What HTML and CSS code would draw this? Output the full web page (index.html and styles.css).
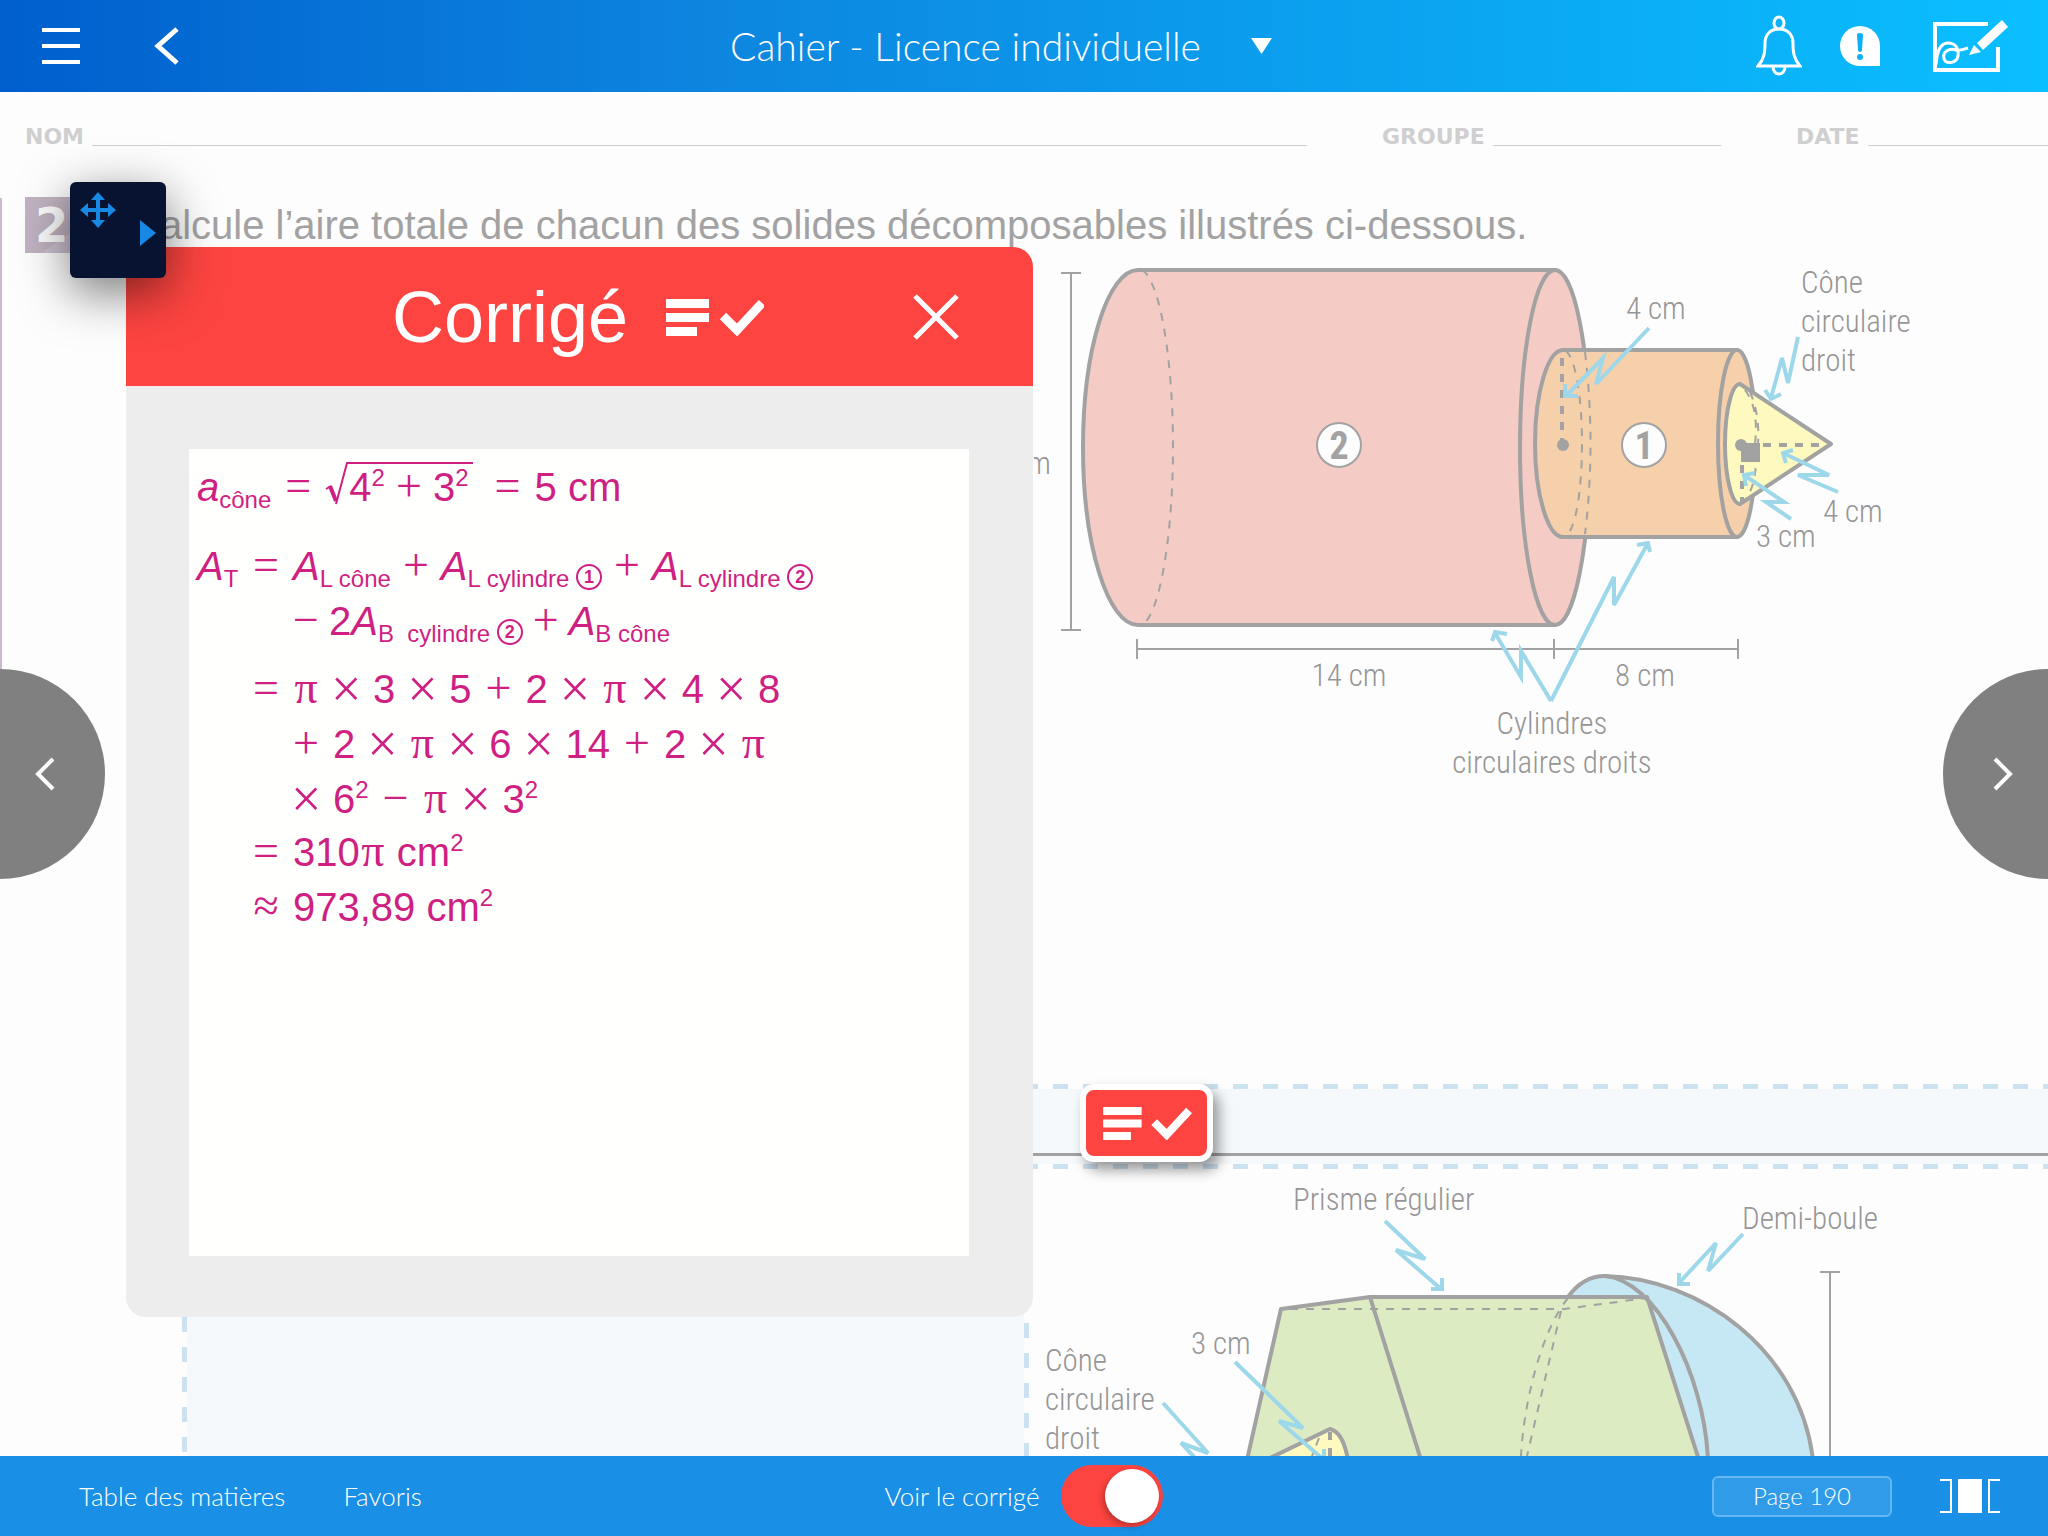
FILE: index.html
```html
<!DOCTYPE html>
<html lang="fr">
<head>
<meta charset="utf-8">
<meta name="viewport" content="width=device-width, initial-scale=1">
<title>Cahier - Licence individuelle</title>
<link rel="stylesheet" href="styles.css">
</head>
<body>
<svg class="defs" width="0" height="0" aria-hidden="true">
  <symbol id="icon-answer" viewBox="0 0 98 38">
    <path d="M0 1h43v9H0zM0 15h43v9H0zM0 29h31v9H0z" fill="#fff"/>
    <path d="M57 18l14 14L96 5" fill="none" stroke="#fff" stroke-width="9"/>
  </symbol>
</svg>

<header class="topbar">
  <div class="topbar-side">
    <button class="icon-btn" aria-label="Menu">
      <svg width="38" height="38" viewBox="0 0 38 38"><path d="M0 3h38M0 19h38M0 35h38" stroke="#fff" stroke-width="4"/></svg>
    </button>
    <button class="icon-btn back" aria-label="Retour">
      <svg width="28" height="42" viewBox="0 0 28 42"><path d="M25 4L6 21l19 17" fill="none" stroke="#fff" stroke-width="5"/></svg>
    </button>
  </div>
  <button class="book-title">Cahier - Licence individuelle
    <svg width="21" height="16" viewBox="0 0 21 16"><path d="M0 0h21L10.500 16z" fill="#fff"/></svg>
  </button>
  <div class="topbar-side tools">
    <button class="icon-btn" aria-label="Notifications">
      <svg width="46" height="62" viewBox="0 0 46 62" fill="none" stroke="#fff" stroke-width="3">
        <ellipse cx="23" cy="8" rx="5" ry="6"/>
        <path d="M2 51C8 44 9 38 9 28C9 20 14 14 23 14S37 20 37 28C37 38 38 44 44 51z"/>
        <path d="M17 52a6 7 0 0 0 12 0"/>
      </svg>
    </button>
    <button class="icon-btn" aria-label="Signaler">
      <svg width="40" height="40" viewBox="0 0 40 40">
        <path d="M20 0A20 20 0 0 0 20 40H40V20A20 20 0 0 0 20 0z" fill="#fff"/>
        <path d="M17 9q0-2 3-2t3 2l-1 15q0 2-2 2t-2-2z" fill="#0bb1f8"/><circle cx="20" cy="31" r="3" fill="#0bb1f8"/>
      </svg>
    </button>
    <button class="icon-btn annotate" aria-label="Annoter">
      <svg width="78" height="54" viewBox="0 0 78 54">
        <path d="M56 5H3v46h63V28" fill="none" stroke="#fff" stroke-width="4"/>
        <path d="M4 46C5 32 8 24 16 24c8 0 11 6 10 13s-12 9-14 3c-2-8 6-11 12-9 5 1 8-1 12-2" fill="none" stroke="#fff" stroke-width="3"/>
        <path d="M45 24L70 1l6 7L51 31zM42 26l7 7-12 3z" fill="#fff"/>
      </svg>
    </button>
  </div>
</header>

<main class="page">
  <div class="fields">
    <div class="field"><span>NOM</span><i></i></div>
    <div class="field"><span>GROUPE</span><i></i></div>
    <div class="field"><span>DATE</span><i></i></div>
  </div>

  <div class="question">
    <span class="question-no">2</span>
    <h2>Calcule l’aire totale de chacun des solides décomposables illustrés ci-dessous.</h2>
  </div>

  <svg class="figure" width="1014" height="831" viewBox="1034 253 1014 831" role="img" aria-label="Solide formé de deux cylindres et d’un cône">
    <g class="dim"><path d="M1071 273V630M1061 273h20M1061 630h20M1137 649H1738M1137 639v20M1554 639v20M1738 639v20"/></g>
    <g class="solid">
      <path class="pink" d="M1555 270H1138C1108 270 1083 349 1083 447.500S1108 625 1138 625H1555z"/>
      <ellipse class="pink" cx="1555" cy="447.500" rx="35" ry="177.500"/>
      <path class="orange" d="M1737 350H1563C1548 350 1535 392 1535 443.500S1548 537 1563 537H1737z"/>
      <ellipse class="orange" cx="1737" cy="443.500" rx="19" ry="93.500"/>
      <path class="yellow" d="M1740 384L1831 444 1740 504C1732 504 1725 478 1725 444S1732 384 1740 384z"/>
    </g>
    <g class="hidden-edge">
      <path d="M1142 270C1160 280 1173 360 1173 447S1160 615 1142 625"/>
      <path d="M1566 351C1575 358 1582 395 1582 444S1575 530 1566 536"/>
      <path d="M1585 352Q1596 444 1585 534"/>
      <path d="M1745 390Q1759 408 1755 444Q1759 482 1745 500M1750 392Q1760 415 1758 444"/>
    </g>
    <path class="radius" d="M1562 358V440M1763 445h64M1742 465v38"/>
    <g fill="#a2a2a2"><circle cx="1563" cy="445" r="6"/><circle cx="1741" cy="445" r="6"/><path d="M1741 443h19v19h-19z"/></g>
    <g class="badge-no"><circle cx="1339" cy="445" r="22"/><circle cx="1644" cy="445" r="22"/>
      <text x="1339" y="459">2</text><text x="1644" y="459">1</text></g>
    <g class="pointer">
      <path d="M1649 328L1596 384 1603 358 1566 396M1565 384V396H1578"/>
      <path d="M1798 337L1788 383 1782 358 1771 398M1765 390L1771 399 1781 394"/>
      <path d="M1838 492L1798 475 1829 475 1783 453M1793 450L1783 453 1786 463"/>
      <path d="M1791 519L1766 502 1784 502 1744 475M1755 473L1744 475 1746 486"/>
      <path d="M1551 701L1521 651V677L1495 633M1507 634L1495 632 1492 641"/>
      <path d="M1551 701L1614 577V605L1648 543M1637 545L1648 543 1650 552"/>
    </g>
    <g class="label">
      <text x="1051" y="474" text-anchor="end">12 cm</text>
      <text x="1626" y="319">4 cm</text>
      <text x="1801" y="293">Cône</text><text x="1801" y="332">circulaire</text><text x="1801" y="371">droit</text>
      <text x="1756" y="547">3 cm</text><text x="1823" y="522">4 cm</text>
      <text x="1349" y="686" text-anchor="middle">14 cm</text><text x="1645" y="686" text-anchor="middle">8 cm</text>
      <text x="1552" y="734" text-anchor="middle">Cylindres</text><text x="1552" y="773" text-anchor="middle">circulaires droits</text>
    </g>
  </svg>

  <div class="band"><button class="answer-btn" aria-label="Afficher le corrigé"><svg width="92" height="34"><use href="#icon-answer"/></svg></button></div>

  <div class="lower">
    <div class="answer-area"></div>
    <svg class="figure" width="1014" height="287" viewBox="1034 1169 1014 287" role="img" aria-label="Solide formé d’un prisme, d’une demi-boule et d’un cône">
      <path class="dim" d="M1830 1272V1456M1820 1272h20"/>
      <g class="solid">
        <path class="blue" d="M1568 1297Q1583 1276 1605 1276C1700 1278 1800 1350 1813 1460H1640L1568 1297z"/>
        <path class="green" d="M1247 1460L1281 1309 1370 1297H1647L1699 1460z"/>
        <path fill="none" d="M1370 1297L1421 1460M1605 1276C1655 1280 1704 1372 1708 1460"/>
        <path class="yellow" d="M1266 1460L1330 1429Q1343 1432 1348 1460z"/>
      </g>
      <path class="hidden-edge" d="M1290 1309H1564L1647 1298M1561 1311L1527 1456M1568 1298C1542 1330 1524 1400 1521 1456M1319 1438L1312 1456"/>
      <path class="radius" d="M1330 1432V1456"/>
      <g class="pointer">
        <path d="M1385 1221L1425 1259 1396 1250 1441 1289M1431 1289H1442V1278"/>
        <path d="M1743 1234L1708 1271 1716 1243 1679 1283M1679 1273V1284H1690"/>
        <path d="M1235 1362L1303 1428 1279 1421 1324 1460M1324 1449V1460"/>
        <path d="M1163 1403L1208 1453 1181 1443 1197 1460"/>
      </g>
      <g class="label">
        <text x="1293" y="1210">Prisme régulier</text><text x="1742" y="1229">Demi-boule</text><text x="1191" y="1354">3 cm</text>
        <text x="1045" y="1371">Cône</text><text x="1045" y="1410">circulaire</text><text x="1045" y="1449">droit</text>
      </g>
    </svg>
  </div>

  <section class="panel" aria-labelledby="panel-title">
    <div class="panel-head">
      <h1 id="panel-title">Corrigé</h1>
      <svg width="98" height="38"><use href="#icon-answer"/></svg>
      <button class="close" aria-label="Fermer"><svg width="46" height="46" viewBox="0 0 46 46"><path d="M2 2l42 42M44 2L2 44" stroke="#fff" stroke-width="5"/></svg></button>
    </div>
    <div class="sheet">
      <div class="row first">
        <span><em>a</em><sub>cône</sub></span><b>=</b>
        <span class="root"><svg width="24" height="44" viewBox="0 0 24 44"><path d="M1 27l5-3" fill="none" stroke="#cf1f83" stroke-width="2"/><path d="M5 24l6 15" fill="none" stroke="#cf1f83" stroke-width="4"/><path d="M11 42L22 1h2" fill="none" stroke="#cf1f83" stroke-width="2"/></svg><span class="radicand"><span>4<sup>2</sup></span><b>+</b><span>3<sup>2</sup></span></span></span>
        <b>=</b><span>5 cm</span>
      </div>
      <div class="steps">
        <span class="lhs"><em>A</em><sub>T</sub></span><b class="eq">=</b>
        <div class="row tight"><span><em>A</em><sub>L cône</sub></span><b>+</b><span><em>A</em><sub>L cylindre <i class="ring">1</i></sub></span><b>+</b><span><em>A</em><sub>L cylindre <i class="ring">2</i></sub></span></div>
        <div class="row minus"><b>−</b><span>2<em>A</em><sub>B&nbsp; cylindre <i class="ring">2</i></sub></span><b>+</b><span><em>A</em><sub>B cône</sub></span></div>
        <b class="eq gap">=</b>
        <div class="row gap"><b>π</b><b class="times">×</b><span>3</span><b class="times">×</b><span>5</span><b>+</b><span>2</span><b class="times">×</b><b>π</b><b class="times">×</b><span>4</span><b class="times">×</b><span>8</span></div>
        <div class="row"><b>+</b><span>2</span><b class="times">×</b><b>π</b><b class="times">×</b><span>6</span><b class="times">×</b><span>14</span><b>+</b><span>2</span><b class="times">×</b><b>π</b></div>
        <div class="row"><b class="times">×</b><span>6<sup>2</sup></span><b>−</b><b>π</b><b class="times">×</b><span>3<sup>2</sup></span></div>
        <b class="eq">=</b>
        <div class="row"><span>310<b>π</b> cm<sup>2</sup></span></div>
        <b class="eq">≈</b>
        <div class="row"><span>973,89 cm<sup>2</sup></span></div>
      </div>
    </div>
  </section>

  <button class="dock" aria-label="Déplacer la barre d’outils">
    <svg width="96" height="96" viewBox="0 0 96 96" fill="#1788e3">
      <path d="M28 10l7 8h-5v8h8v-5l8 7-8 7v-5h-8v8h5l-7 8-7-8h5v-8h-8v5l-8-7 8-7v5h8v-8h-5z"/>
      <path d="M70 38l16 13-16 13z"/>
    </svg>
  </button>

  <button class="turn prev" aria-label="Page précédente"><svg width="20" height="34" viewBox="0 0 20 34"><path d="M18 2L3 17l15 15" fill="none" stroke="#fff" stroke-width="4"/></svg></button>
  <button class="turn next" aria-label="Page suivante"><svg width="20" height="34" viewBox="0 0 20 34"><path d="M2 2l15 15L2 32" fill="none" stroke="#fff" stroke-width="4"/></svg></button>
</main>

<footer class="bottombar">
  <nav><a href="#toc">Table des matières</a><a href="#favoris">Favoris</a></nav>
  <label class="switch">Voir le corrigé <input type="checkbox" checked></label>
  <div class="pager">
    <button class="page-no">Page 190</button>
    <button class="icon-btn" aria-label="Affichage">
      <svg width="60" height="36" viewBox="0 0 60 36"><path d="M0 2h11v32H0M60 2H49v32h11" fill="none" stroke="#fff" stroke-width="2"/><path d="M18 1h24v34H18z" fill="#fff"/></svg>
    </button>
  </div>
</footer>
</body>
</html>
```
FILE: styles.css
```css
* { box-sizing: border-box; }

body {
  margin: 0;
  min-height: 100vh;
  display: flex;
  flex-direction: column;
  background: #fefdfe;
  font-family: "Liberation Sans", Arial, sans-serif;
}

button {
  border: 0;
  padding: 0;
  background: none;
  color: inherit;
  font: inherit;
  cursor: pointer;
}

svg { display: block; }
.defs { position: absolute; }

/* Top bar */
.topbar {
  height: 92px;
  flex: none;
  padding: 0 38px 0 42px;
  display: grid;
  grid-template-columns: 1fr auto 1fr;
  align-items: center;
  background: linear-gradient(90deg, #005fcd, #0d86e0 35%, #0ba3f1 68%, #0abfff);
  color: #fff;
}
.topbar-side { display: flex; align-items: center; }
.back { margin-left: 72px; }
.tools { justify-content: flex-end; gap: 38px; }
.annotate { margin-left: 14px; }
.book-title {
  display: flex;
  align-items: center;
  gap: 50px;
  margin-right: 50px;
  font: 300 39px/48px Lato, sans-serif;
}

/* Workbook page */
.page {
  flex: 1;
  position: relative;
  overflow: hidden;
  display: flex;
  flex-direction: column;
}
.page::before {
  content: "";
  position: absolute;
  left: 0;
  top: 106px;
  width: 2px;
  height: 614px;
  background: #cbbacb;
}
.fields {
  display: grid;
  grid-template-columns: 1fr 339px 252px;
  gap: 75px;
  padding: 34px 0 0 25px;
}
.field {
  display: flex;
  align-items: flex-end;
  gap: 8px;
  font: bold 22px/22px "DejaVu Sans", sans-serif;
  color: #cfcfd0;
}
.field i { flex: 1; height: 1px; margin-bottom: 2px; background: #cfcfd0; }

.question {
  display: flex;
  align-items: center;
  height: 56px;
  margin: 49px 0 0 25px;
}
.question-no {
  width: 80px;
  height: 56px;
  padding-left: 10px;
  margin-right: 26px;
  background: linear-gradient(145deg, #c0b3c1 60%, #cdc0d1 61%);
  color: #fefdfe;
  font: bold 48px/56px "DejaVu Sans", sans-serif;
}
.question h2 { margin: 0; font-size: 40px; line-height: 58px; font-weight: 400; color: #a2a2a2; white-space: nowrap; }

.figure { flex: none; align-self: flex-end; }
.solid { stroke: #a2a2a2; stroke-width: 4; stroke-linejoin: round; }
.pink { fill: #f5ccc5; }
.orange { fill: #f5d0aa; }
.yellow { fill: #fefabf; }
.green { fill: #dcebc2; }
.blue { fill: #c6e8f4; }
.dim { fill: none; stroke: #a2a2a2; stroke-width: 2; }
.hidden-edge { fill: none; stroke: #a2a2a2; stroke-width: 2; stroke-dasharray: 8 8; }
.radius { fill: none; stroke: #a2a2a2; stroke-width: 4; stroke-dasharray: 8 8; }
.pointer { fill: none; stroke: #9dd8ea; stroke-width: 4; }
.label { fill: #969696; font: 300 31px "Liberation Sans Narrow", "Roboto Condensed", sans-serif; }
.badge-no circle { fill: #fefdfe; stroke: #a2a2a2; stroke-width: 2; }
.badge-no text { fill: #a2a2a2; font: bold 38px "Liberation Sans Narrow", "Roboto Condensed", sans-serif; text-anchor: middle; }

.band {
  flex: none;
  position: relative;
  height: 85px;
  margin-left: 183px;
  background:
    repeating-linear-gradient(90deg, #cde2f1 0 15px, #fefdfe 15px 30px) top / 100% 5px no-repeat,
    repeating-linear-gradient(90deg, #cde2f1 0 15px, #fefdfe 15px 30px) bottom / 100% 5px no-repeat,
    linear-gradient(#a2a2a2, #a2a2a2) 0 69px / 100% 3px no-repeat,
    #f5f9fc;
}
.answer-btn {
  position: absolute;
  left: 897px;
  top: 0;
  width: 133px;
  height: 78px;
  display: grid;
  place-items: center;
  border: 6px solid #fff;
  border-radius: 14px;
  background: #fd4440;
  box-shadow: 6px 8px 14px #0006;
}
.lower { flex: 1; display: flex; justify-content: space-between; }
.lower .figure { margin-left: 5px; }
.answer-area {
  flex: none;
  width: 847px;
  margin-left: 182px;
  margin-right: -5px;
  background:
    repeating-linear-gradient(#cde2f1 0 13px, #fefdfe 13px 28px, #cde2f1 28px 30px) left / 5px 100% no-repeat,
    repeating-linear-gradient(#fefdfe 0 4px, #cde2f1 4px 19px, #fefdfe 19px 30px) right / 5px 100% no-repeat,
    #f5f9fc;
}

/* Answer panel, floating over the page */
.panel {
  position: absolute;
  left: 126px;
  top: 155px;
  width: 907px;
  border-radius: 20px;
  overflow: hidden;
  background: #ededed;
}
.panel-head {
  position: relative;
  display: flex;
  align-items: center;
  gap: 38px;
  height: 139px;
  padding-left: 266px;
  background: #fd4440;
  color: #fff;
}
.panel-head h1 { margin: 0; font-size: 72px; line-height: 80px; font-weight: 400; }
.close { margin: 0 74px 0 auto; }
.sheet {
  margin: 63px 64px 61px 63px;
  height: 807px;
  padding: 11px 8px;
  background: #fffffd;
  color: #cf1f83;
  font-size: 40px;
  line-height: 55px;
}
.sheet sub, .sheet sup { font-size: 24px; line-height: 0; vertical-align: baseline; position: relative; }
.sheet sub { top: 7px; }
.sheet sup { top: -15px; }
.sheet b {
  display: inline-block;
  min-width: 26px;
  text-align: center;
  font: 46px/50px "Liberation Serif", serif;
}
.sheet .times { position: relative; top: 4px; width: 30px; margin: 0 -2px; font-size: 54px; }
.row { display: flex; align-items: baseline; gap: 14px; height: 55px; white-space: nowrap; }
.tight { gap: 12px; }
.minus { gap: 10px; }
.root { position: relative; padding-left: 24px; margin-right: 8px; }
.root svg { position: absolute; left: 0; top: 0; }
.radicand { display: flex; align-items: baseline; gap: 11px; padding-right: 4px; border-top: 2px solid; line-height: 46px; }
.sheet .radicand b { line-height: 42px; }
.steps { display: grid; grid-template-columns: 56px 40px 1fr; align-items: baseline; margin-top: 24px; }
.steps .row { grid-column: 3; }
.eq { grid-column: 2; justify-self: start; }
.steps .gap { margin-top: 11px; }
.ring {
  display: inline-block;
  width: 26px;
  height: 26px;
  border: 2px solid;
  border-radius: 50%;
  vertical-align: 4px;
  text-align: center;
  font: bold 18px/22px "Liberation Sans", sans-serif;
}

/* Floating controls */
.dock {
  position: absolute;
  left: 70px;
  top: 90px;
  border-radius: 6px;
  background: #071330;
  box-shadow: 0 14px 50px #0008;
}
.turn {
  position: absolute;
  top: 577px;
  width: 105px;
  height: 210px;
  background: #808080;
}
.prev { left: 0; border-radius: 0 105px 105px 0; padding-left: 35px; }
.next { right: 0; border-radius: 105px 0 0 105px; padding-left: 50px; }

/* Bottom bar */
.bottombar {
  height: 80px;
  flex: none;
  padding: 0 48px;
  display: grid;
  grid-template-columns: 1fr auto 1fr;
  align-items: center;
  background: #1990e5;
  color: #fff;
  font: 300 26px/32px Lato, sans-serif;
}
.bottombar nav { display: flex; gap: 58px; padding-left: 31px; }
.bottombar a { color: inherit; text-decoration: none; }
.switch { display: flex; align-items: center; gap: 22px; }
.switch input {
  appearance: none;
  margin: 0;
  width: 102px;
  height: 62px;
  padding: 4px;
  border-radius: 31px;
  background: #fd4440;
}
.switch input::before {
  content: "";
  display: block;
  width: 54px;
  height: 54px;
  margin-left: auto;
  border-radius: 50%;
  background: #fff;
  box-shadow: -2px 3px 6px #0004;
}
.pager { display: flex; justify-content: flex-end; align-items: center; gap: 48px; }
.page-no {
  width: 180px;
  height: 41px;
  border: 2px solid #66b7f1;
  border-radius: 6px;
  background: #309be8;
  font-size: 24px;
}
```
